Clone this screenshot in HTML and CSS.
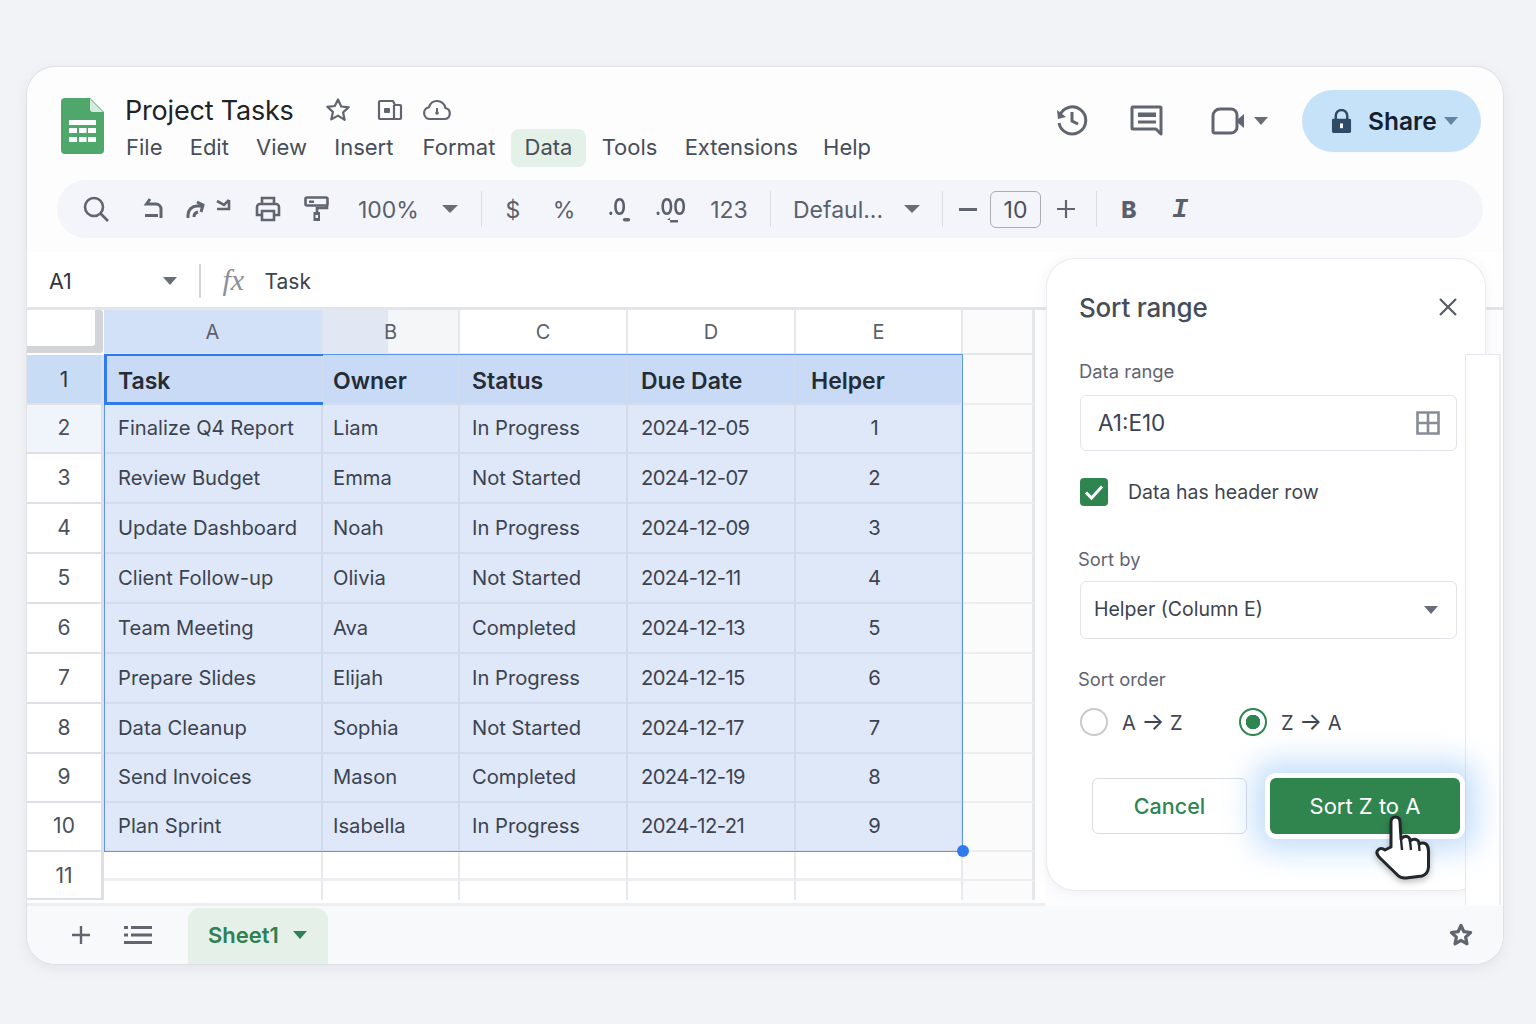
FILE: index.html
```html
<!DOCTYPE html>
<html lang="en">
<head>
<meta charset="utf-8">
<title>Project Tasks</title>
<link rel="stylesheet" href="styles.css">
</head>
<body>
<div class="window">
  <header class="header">
    <svg class="logo" viewBox="0 0 43 56"><path d="M4 0H29L43 14V52a4 4 0 0 1-4 4H4a4 4 0 0 1-4-4V4a4 4 0 0 1 4-4Z" fill="#4fa76c"/><path d="M29 1L42 14H32a3 3 0 0 1-3-3Z" fill="#d5ecdc"/><g fill="#fff"><rect x="8" y="22" width="27" height="5"/><rect x="8" y="30" width="8" height="5"/><rect x="18" y="30" width="7.500" height="5"/><rect x="27" y="30" width="8" height="5"/><rect x="8" y="39" width="8" height="5"/><rect x="18" y="39" width="7.500" height="5"/><rect x="27" y="39" width="8" height="5"/></g></svg>
    <div class="titles">
      <div class="title-row">
        <span class="doc-title">Project Tasks</span>
        <svg class="ico-star" viewBox="0 0 26 26"><path d="M13 2.500l3.200 7 7.500.8-5.600 5.100 1.600 7.500L13 18.600l-6.700 3.800 1.600-7.500-5.600-5.100 7.500-.8Z" fill="none" stroke="#60656f" stroke-width="2.200" stroke-linejoin="round"/></svg>
        <svg class="ico-move" viewBox="0 0 26 24"><path d="M3 3h13l2 4h5a1 1 0 0 1 1 1v12a1 1 0 0 1-1 1H3a1 1 0 0 1-1-1V4a1 1 0 0 1 1-1Z" fill="none" stroke="#60656f" stroke-width="2.200" stroke-linejoin="round"/><path d="M17 7v14" stroke="#60656f" stroke-width="2.200"/><rect x="7" y="10" width="6" height="5" rx="1" fill="#60656f"/></svg>
        <svg class="ico-cloud" viewBox="0 0 30 22"><path d="M8 20a6 6 0 0 1-1-11.900C8.200 4.300 11.300 2 15 2c4.300 0 7.800 3 8.400 7A5.600 5.600 0 0 1 23 20Z" fill="none" stroke="#60656f" stroke-width="2.200" stroke-linejoin="round"/><circle cx="15" cy="14" r="1.800" fill="#60656f"/><path d="M15 9v4" stroke="#60656f" stroke-width="2"/></svg>
      </div>
      <nav class="menu">
        <span class="menu-item">File</span>
        <span class="menu-item">Edit</span>
        <span class="menu-item">View</span>
        <span class="menu-item">Insert</span>
        <span class="menu-item menu-format">Format</span>
        <span class="menu-item menu-active">Data</span>
        <span class="menu-item menu-tools">Tools</span>
        <span class="menu-item">Extensions</span>
        <span class="menu-item menu-help">Help</span>
      </nav>
    </div>
    <div class="head-actions">
      <svg class="ico-history" viewBox="0 0 34 34"><path d="M5.500 13A13.500 13.500 0 1 1 5 20" fill="none" stroke="#60656f" stroke-width="3"/><path d="M3 7l1 9 8-2Z" fill="#60656f"/><path d="M18 9v9l6 3" fill="none" stroke="#60656f" stroke-width="3"/></svg>
      <svg class="ico-comment" viewBox="0 0 34 34"><path d="M3 3h27a1 1 0 0 1 1 1v26l-5-5H3a1 1 0 0 1-1-1V4a1 1 0 0 1 1-1Z" fill="none" stroke="#60656f" stroke-width="3" stroke-linejoin="round"/><path d="M8 8.500H26V13H8Z" fill="#60656f"/><path d="M8 18H26" stroke="#60656f" stroke-width="3"/></svg>
      <svg class="ico-video" viewBox="0 0 34 28"><path d="M9 2H20a6 6 0 0 1 6 6V20a6 6 0 0 1-6 6H4a2 2 0 0 1-2-2V9a7 7 0 0 1 7-7Z" fill="none" stroke="#60656f" stroke-width="3"/><path d="M26 13l7-6V21l-7-6Z" fill="#60656f"/></svg>
      <span class="caret caret-video"></span>
      <button class="share">
        <svg class="ico-lock" viewBox="0 0 22 26"><path d="M5 11V7a6 6 0 0 1 12 0v4" fill="none" stroke="#2f4a66" stroke-width="2.600"/><rect x="1" y="10" width="20" height="15" rx="1.500" fill="#2f4a66"/><rect x="9.500" y="15" width="3" height="5" fill="#fff"/></svg>
        <span>Share</span>
        <span class="caret caret-share"></span>
      </button>
    </div>
  </header>

  <div class="toolbar">
    <svg class="t-search" viewBox="0 0 28 28"><circle cx="12" cy="12" r="9" fill="none" stroke="#60656f" stroke-width="2.600"/><path d="M18.500 18.500L26 26" stroke="#60656f" stroke-width="2.600"/></svg>
    <svg class="t-undo" viewBox="0 0 24 24"><path d="M9 2L5.500 7H15a5 5 0 0 1 5 5v9M4 18.500H17" fill="none" stroke="#60656f" stroke-width="3"/></svg>
    <svg class="t-redo" viewBox="0 0 24 24"><path d="M4 21v-3a9 9 0 0 1 9-9h5M13 5l6 3-2 7M10 20a5 5 0 0 1 4-5" fill="none" stroke="#60656f" stroke-width="3"/></svg>
    <svg class="t-redo2" viewBox="0 0 16 16"><path d="M1 3l7 4 5-5M13 2v9H1" fill="none" stroke="#60656f" stroke-width="2.600"/></svg>
    <svg class="t-print" viewBox="0 0 26 26"><path d="M7 8V2h12v6M7 19H2V11a3 3 0 0 1 3-3h16a3 3 0 0 1 3 3v8h-5" fill="none" stroke="#60656f" stroke-width="2.600"/><path d="M7 15h12v9H7Z" fill="none" stroke="#60656f" stroke-width="2.600"/></svg>
    <svg class="t-paint" viewBox="0 0 26 26"><rect x="1.500" y="1.500" width="22" height="8" rx="1.500" fill="none" stroke="#60656f" stroke-width="2.600"/><path d="M5 4.500H10V7H5Z" fill="#60656f"/><path d="M23 9v3H13v4" fill="none" stroke="#60656f" stroke-width="2.600"/><rect x="9.500" y="16" width="6.500" height="9" fill="#60656f"/><rect x="11.500" y="19" width="2.500" height="3" fill="#f3f5fa"/></svg>
    <span class="t-text t-zoom">100%</span>
    <span class="caret t-caret-1"></span>
    <span class="sep sep-1"></span>
    <span class="t-text t-dollar">$</span>
    <span class="t-text t-percent">%</span>
    <span class="t-dec t-dec-less"><span class="t-text">.0</span><svg viewBox="0 0 12 6"><rect x="2" y="1" width="8" height="4" rx="2" fill="#60656f"/></svg></span>
    <span class="t-dec t-dec-more"><span class="t-text">.00</span><svg viewBox="0 0 14 6"><path d="M2 3L5 0.500V5.500H13V3H5Z" fill="#60656f"/></svg></span>
    <span class="t-text t-num">123</span>
    <span class="sep sep-2"></span>
    <span class="t-text t-font">Defaul...</span>
    <span class="caret t-caret-2"></span>
    <span class="sep sep-3"></span>
    <span class="t-minus"></span>
    <span class="t-size">10</span>
    <svg class="t-plus" viewBox="0 0 20 20"><path d="M10 1V19M1 10H19" stroke="#60656f" stroke-width="2.200"/></svg>
    <span class="sep sep-4"></span>
    <span class="t-text t-bold">B</span>
    <span class="t-text t-italic">I</span>
  </div>

  <div class="formula">
    <span class="cell-name">A1</span>
    <span class="caret f-caret"></span>
    <span class="f-sep"></span>
    <span class="fx">fx</span>
    <span class="f-value">Task</span>
  </div>

  <div class="sheet">
    <div class="grid">
      <div class="corner"></div>
      <div class="ch ch-sel">A</div>
      <div class="ch ch-b">B</div>
      <div class="ch">C</div>
      <div class="ch">D</div>
      <div class="ch">E</div>
      <div class="ch ch-f"></div>

      <div class="rh rh-active">1</div>
      <div class="c hd a">Task</div><div class="c hd b">Owner</div><div class="c hd d">Status</div><div class="c hd e">Due Date</div><div class="c hd f">Helper</div><div class="x"></div>

      <div class="rh rh-second">2</div>
      <div class="c a">Finalize Q4 Report</div><div class="c b">Liam</div><div class="c d">In Progress</div><div class="c e date">2024-12-05</div><div class="c n">1</div><div class="x"></div>

      <div class="rh">3</div>
      <div class="c a">Review Budget</div><div class="c b">Emma</div><div class="c d">Not Started</div><div class="c e date">2024-12-07</div><div class="c n">2</div><div class="x"></div>

      <div class="rh">4</div>
      <div class="c a">Update Dashboard</div><div class="c b">Noah</div><div class="c d">In Progress</div><div class="c e date">2024-12-09</div><div class="c n">3</div><div class="x"></div>

      <div class="rh">5</div>
      <div class="c a">Client Follow-up</div><div class="c b">Olivia</div><div class="c d">Not Started</div><div class="c e date">2024-12-11</div><div class="c n">4</div><div class="x"></div>

      <div class="rh">6</div>
      <div class="c a">Team Meeting</div><div class="c b">Ava</div><div class="c d">Completed</div><div class="c e date">2024-12-13</div><div class="c n">5</div><div class="x"></div>

      <div class="rh">7</div>
      <div class="c a">Prepare Slides</div><div class="c b">Elijah</div><div class="c d">In Progress</div><div class="c e date">2024-12-15</div><div class="c n">6</div><div class="x"></div>

      <div class="rh">8</div>
      <div class="c a">Data Cleanup</div><div class="c b">Sophia</div><div class="c d">Not Started</div><div class="c e date">2024-12-17</div><div class="c n">7</div><div class="x"></div>

      <div class="rh">9</div>
      <div class="c a">Send Invoices</div><div class="c b">Mason</div><div class="c d">Completed</div><div class="c e date">2024-12-19</div><div class="c n">8</div><div class="x"></div>

      <div class="rh">10</div>
      <div class="c a">Plan Sprint</div><div class="c b">Isabella</div><div class="c d">In Progress</div><div class="c e date">2024-12-21</div><div class="c n">9</div><div class="x"></div>

      <div class="rh rh-last">11</div>
      <div class="e0"></div><div class="e0"></div><div class="e0"></div><div class="e0"></div><div class="e0"></div><div class="x"></div>
      <div class="e1"></div><div class="e1"></div><div class="e1"></div><div class="e1"></div><div class="e1"></div><div class="x x-end"></div>

      <div class="selection"><span class="handle"></span></div>
      <div class="active-cell"></div>
    </div>
  </div>

  <footer class="footer">
    <svg class="ft-plus" viewBox="0 0 20 20"><path d="M10 1V19M1 10H19" stroke="#60656f" stroke-width="2.400"/></svg>
    <svg class="ft-list" viewBox="0 0 28 20"><path d="M0 2.500H4M7 2.500H28M0 10H4M7 10H28M0 17.500H28" stroke="#60656f" stroke-width="2.800"/></svg>
    <div class="tab"><span>Sheet1</span><span class="caret caret-tab"></span></div>
    <svg class="ft-star" viewBox="0 0 24 24"><path d="M12 2.500l2.900 6.200 6.700.8-5 4.600 1.400 6.700L12 17.400l-6 3.400 1.400-6.700-5-4.600 6.700-.8Z" fill="#fff" stroke="#60656f" stroke-width="3.200" stroke-linejoin="round"/></svg>
  </footer>

  <aside class="panel">
    <div class="panel-strip"></div>
    <div class="panel-head">
      <h2 class="panel-title">Sort range</h2>
      <svg class="panel-close" viewBox="0 0 20 20"><path d="M2 2L18 18M18 2L2 18" stroke="#555a64" stroke-width="2.200"/></svg>
    </div>
    <label class="label label-range">Data range</label>
    <div class="field field-range">
      <span>A1:E10</span>
      <svg class="ico-grid" viewBox="0 0 24 24"><path d="M1.500 1.500H22.500V22.500H1.500ZM12 1.500V22.500M1.500 12H22.500" fill="none" stroke="#888c94" stroke-width="2.600"/></svg>
    </div>
    <div class="check-row">
      <span class="check"><svg viewBox="0 0 28 28"><path d="M6 14.500L11.500 20L22 8.500" fill="none" stroke="#fff" stroke-width="3"/></svg></span>
      <span>Data has header row</span>
    </div>
    <label class="label label-by">Sort by</label>
    <div class="field field-by">
      <span class="field-text">Helper (Column E)</span>
      <span class="caret caret-by"></span>
    </div>
    <label class="label label-order">Sort order</label>
    <div class="radios">
      <span class="radio"></span><span class="radio-text">A <span class="arrow">→</span> Z</span>
      <span class="radio radio-on"></span><span class="radio-text">Z <span class="arrow">→</span> A</span>
    </div>
    <div class="buttons">
      <button class="btn-cancel">Cancel</button>
      <button class="btn-sort">Sort Z to A</button>
    </div>
    <svg class="hand" viewBox="0 0 65 75"><path d="M21 38V13Q21 8 25.500 8Q30 8 30 13L31 30Q35 26 38 28Q40 29 40 32Q44 29 47 31Q49 32 49 35Q53 33 56 35Q58.500 37 58.500 42V58Q58 65 52 67L36 69Q31 69.500 28 66.500L10 49Q5 44 8 41Q11 38 15 41Z" fill="#fff" stroke="#23262b" stroke-width="3" stroke-linejoin="round"/><path d="M31 30L32 41M40 32L41 41M49 35L49.500 42" fill="none" stroke="#23262b" stroke-width="2.400"/></svg>
  </aside>
</div>
</body>
</html>
```
FILE: styles.css
```css
* { box-sizing: border-box; }
html, body { margin: 0; height: 100%; }
body {
  background: #f2f3f6;
  padding: 67px 33px 60px 27px;
  font-family: "Inter", "Liberation Sans", sans-serif;
  color: #3c4350;
  overflow: hidden;
}
svg { display: block; flex: none; }
button { font-family: inherit; border: 0; padding: 0; }

.window {
  position: relative;
  width: 1476px;
  height: 897px;
  background: #fdfdfe;
  border-radius: 28px;
  box-shadow: 0 0 0 1px #dfe1e7, 0 4px 14px rgba(90, 100, 130, .10);
  overflow: hidden;
  display: flex;
  flex-direction: column;
}

.caret {
  display: block;
  flex: none;
  width: 0;
  height: 0;
  border-left: 8px solid transparent;
  border-right: 8px solid transparent;
  border-top: 8px solid #686d77;
}

/* header */
.header { height: 108px; display: flex; flex: none; padding: 31px 22px 0 34px; }
.logo { width: 43px; height: 56px; }
.titles { margin-left: 21px; margin-top: -6px; }
.title-row { display: flex; align-items: center; height: 36px; }
.doc-title { font-size: 27px; color: #202227; letter-spacing: -.2px; }
.ico-star { width: 26px; height: 26px; margin-left: 31px; }
.ico-move { width: 26px; height: 24px; margin-left: 26px; }
.ico-cloud { width: 30px; height: 22px; margin-left: 19px; }
.menu { display: flex; margin-left: -12.600px; margin-top: 1px; }
.menu-item { font-size: 22px; padding: 0 13.600px; height: 38px; line-height: 37px; color: #474e5a; border-radius: 8px; }
.menu-format { margin-left: 2px; }
.menu-active { background: #e3f1e8; margin-left: 2px; }
.menu-tools { margin-left: 2px; }
.menu-help { margin-left: -2px; }
.head-actions { margin-left: auto; display: flex; align-items: center; height: 62px; margin-top: -8px; }
.ico-history { width: 34px; height: 34px; margin-top: -2px; margin-right: 2px; position: relative; left: -1px; }
.ico-comment { width: 34px; height: 34px; margin-left: 39px; }
.ico-video { width: 34px; height: 28px; margin-left: 47px; }
.caret-video { margin-left: 9px; border-left-width: 7px; border-right-width: 7px; }
.share {
  margin-left: 34px;
  width: 179px;
  height: 62px;
  border-radius: 31px;
  background: #c5e2f8;
  display: flex;
  align-items: center;
  padding-left: 29px;
  font-size: 24.500px;
  font-weight: 600;
  color: #15202e;
}
.ico-lock { width: 21px; height: 25px; margin-right: 16px; }
.caret-share { margin-left: 7px; border-left-width: 7px; border-right-width: 7px; border-top-color: #5f86a6; }

/* toolbar */
.toolbar {
  flex: none;
  margin: 5px 20px 0 30px;
  height: 58px;
  border-radius: 29px;
  background: #f3f5fa;
  display: flex;
  align-items: center;
  padding-left: 25px;
}
.t-text { font-size: 23px; color: #5a606b; line-height: 1; padding-top: 2px; }
.sep { display: block; flex: none; width: 1px; height: 36px; background: #d9dce3; }
.t-search { width: 28px; height: 28px; }
.t-undo { width: 24px; height: 24px; margin-left: 31px; }
.t-redo { width: 24px; height: 24px; margin-left: 19px; }
.t-redo2 { width: 16px; height: 16px; margin-left: 8px; margin-top: -6px; }
.t-print { width: 26px; height: 26px; margin-left: 23px; }
.t-paint { width: 26px; height: 26px; margin-left: 23px; }
.t-zoom { width: 60px; margin-left: 28px; }
.t-caret-1 { margin-left: 24px; }
.sep-1 { margin-left: 23px; }
.t-dollar { width: 20px; margin-left: 21px; text-align: center; }
.t-percent { width: 24px; margin-left: 29px; text-align: center; }
.t-dec { position: relative; display: block; flex: none; text-align: center; }
.t-dec-less { width: 32px; margin-left: 25px; }
.t-dec-more { width: 40px; margin-left: 18px; }
.t-dec .t-text { display: inline-block; position: relative; top: -3px; font-weight: 600; transform: scaleX(.84); }
.t-dec svg { position: absolute; bottom: -1px; right: 1px; width: 11px; height: 5.500px; }
.t-dec-more svg { width: 14px; height: 6px; right: 12px; }
.t-num { width: 40px; margin-left: 18px; text-align: center; }
.sep-2 { margin-left: 21px; }
.t-font { width: 88px; margin-left: 22px; white-space: nowrap; }
.t-caret-2 { margin-left: 23px; }
.sep-3 { margin-left: 22px; }
.t-minus { display: block; flex: none; width: 18px; height: 3px; margin-left: 16px; background: #60656f; }
.t-size {
  width: 51px;
  height: 37px;
  margin-left: 13px;
  border: 1.500px solid #a9adb5;
  border-radius: 6px;
  text-align: center;
  line-height: 36px;
  font-size: 23px;
  color: #4a505b;
}
.t-plus { width: 20px; height: 20px; margin-left: 15px; }
.sep-4 { margin-left: 20px; }
.t-bold { width: 20px; margin-left: 22px; text-align: center; font-weight: 800; }
.t-italic { width: 20px; margin-left: 31px; text-align: center; font-family: "Liberation Mono", monospace; font-weight: 700; font-style: italic; font-size: 27px; }

/* formula bar */
.formula {
  flex: none;
  margin-top: 14px;
  height: 58px;
  border-bottom: 3px solid #e4e5ea;
  background: #fff;
  display: flex;
  align-items: center;
  padding: 3px 0 0 22px;
  font-size: 21px;
  color: #30353f;
}
.cell-name { width: 114px; font-size: 21.500px; }
.f-caret { border-left-width: 7.500px; border-right-width: 7.500px; }
.f-sep { width: 1.500px; height: 34px; margin-left: 22px; background: #d3d5da; }
.fx { margin-left: 22px; width: 42px; font-family: "Liberation Serif", serif; font-style: italic; font-size: 30px; color: #8b8f97; margin-top: -3px; }
.f-value { color: #3c4350; }

/* sheet */
.sheet { flex: none; height: 596px; border-bottom: 3px solid #eceef1; width: 1018px; background: #fff; }
.grid {
  position: relative;
  display: grid;
  width: 1010px;
  grid-template-columns: 77px 219px 137px 168px 168px 167px 72px;
  grid-template-rows: 45px 50px 49px 50px 50px 50px 50px 50px 50px 49px 49px 29px 19px;
  font-size: 20.200px;
  color: #3c4350;
}
.corner {
  background: #fff;
  box-shadow: inset -8px -7px 0 #d3d4d8;
  border-radius: 0 3px 3px 0;
  background-clip: padding-box;
  margin: 0 1px 2px 0;
}
.ch {
  display: flex;
  align-items: center;
  justify-content: center;
  font-size: 20px;
  color: #5b616c;
  background: #fff;
  border-right: 2px solid #e6e7eb;
  border-bottom: 2px solid #e6e7eb;
}
.ch-sel { background: #d3e1f8; border-right-color: #dde3ee; }
.ch-b { background: linear-gradient(90deg, #e2e8f3 0 48%, #f5f6f8 48% 100%); }
.ch-f { background: #fbfbfb; border-right: 3px solid #e6e7eb; }
.rh {
  display: flex;
  align-items: center;
  justify-content: center;
  background: #fff;
  border-right: 3px solid #dfe0e5;
  border-bottom: 2px solid #dfe0e5;
  font-size: 21px;
  color: #4b515c;
  padding-bottom: 2px;
}
.rh-active { background: #c9dcf6; color: #2a3340; padding-bottom: 0; }
.rh-second { background: #f0f4fb; }
.rh-last { grid-row: span 2; padding-bottom: 0; }
.c {
  display: flex;
  align-items: center;
  background: #dfe8f9;
  border-right: 2px solid #d2dbeb;
  border-bottom: 2px solid #d3dcec;
  white-space: nowrap;
  padding-bottom: 2px;
}
.hd { background: #c8daf5; font-size: 23px; font-weight: 600; color: #262c35; padding: 3px 0 0; }
.a.c { padding-left: 14px; }
.b.c { padding-left: 10px; }
.d.c { padding-left: 12px; }
.e.c { padding-left: 13px; }
.f.c { padding-left: 15px; }
.date { letter-spacing: -.6px; }
.n { justify-content: center; padding-right: 8px; }
.x { background: #fbfbfb; border-right: 3px solid #e6e7eb; border-bottom: 2px solid #eceef1; }
.x-end { border-bottom: 0; }
.e0 { background: #fff; border-right: 2px solid #e8e9ee; border-bottom: 3px solid #eceef1; }
.e1 { background: #fff; border-right: 2px solid #e8e9ee; }
.selection {
  grid-column: 2 / 7;
  grid-row: 2 / 12;
  position: absolute;
  inset: -1px 0 0;
  border: 1.500px solid #5b96ea;
  pointer-events: none;
}
.handle {
  position: absolute;
  right: -7px;
  bottom: -6px;
  width: 12px;
  height: 12px;
  border-radius: 50%;
  background: #2f7bec;
}
.active-cell {
  grid-column: 2 / 3;
  grid-row: 2 / 3;
  position: absolute;
  inset: -1px 0 0;
  border: 3px solid #2f7bec;
  border-top-width: 2px;
  border-right: 0;
}

/* footer */
.footer {
  flex: 1;
  background: #f8f9fb;
  display: flex;
  padding-left: 44px;
  align-items: center;
}
.ft-plus { width: 20px; height: 20px; }
.ft-list { width: 28px; height: 20px; margin-left: 33px; }
.tab {
  margin-left: 36px;
  align-self: flex-end;
  width: 140px;
  height: 56px;
  background: #e5f0e8;
  border-radius: 12px 12px 0 0;
  display: flex;
  align-items: center;
  padding: 0 0 2px 20px;
  font-size: 22px;
  font-weight: 600;
  color: #2f8153;
}
.caret-tab { margin-left: 14px; border-left-width: 7px; border-right-width: 7px; border-top-color: #2f8153; }
.ft-star { width: 24px; height: 24px; margin-left: auto; margin-right: 30px; }

/* panel */
.panel {
  position: absolute;
  left: 1020px;
  top: 192px;
  width: 438px;
  height: 631px;
  background: #fff;
  border-radius: 28px;
  box-shadow: 0 0 0 1px #eaebf0, 0 2px 14px rgba(90, 100, 130, .10);
  padding: 0 0 0 32px;
}
.panel-strip {
  position: absolute;
  left: 418px;
  top: 95px;
  width: 36px;
  height: 551px;
  background: #fff;
  border-left: 1px solid #e6e7ec;
  border-top: 1px solid #e6e7ec;
  border-right: 2px solid #eceef1;
}
.panel > * { position: relative; }
.panel > .panel-strip { position: absolute; }
.panel-head { display: flex; align-items: center; height: 36px; margin-top: 30px; width: 379px; justify-content: space-between; }
.panel-title { margin: 0; font-size: 26px; font-weight: 500; color: #474d58; letter-spacing: -.2px; }
.panel-close { width: 20px; height: 20px; margin-right: 0; }
.label { display: block; font-size: 18.400px; color: #5f6570; line-height: 24px; }
.label-range { margin-top: 34px; }
.field {
  width: 377px;
  margin-left: 1px;
  background: #fff;
  border: 1.500px solid #e2e4ea;
  border-radius: 6px;
  display: flex;
  align-items: center;
  justify-content: space-between;
  font-size: 22.500px;
  color: #3c4350;
}
.field-range { height: 56px; margin-top: 12px; padding: 0 16px 2px 17px; }
.ico-grid { width: 24px; height: 24px; margin-top: 2px; }
.check-row { display: flex; align-items: center; margin: 27px 0 0 1px; font-size: 19.500px; color: #3f4550; }
.check { width: 28px; height: 28px; border-radius: 4px; background: #2f8550; margin-right: 20px; }
.label-by { margin-top: 41px; margin-left: -1px; }
.field-by { height: 58px; margin-top: 10px; padding: 0 18px 0 13px; font-size: 19.500px; }
.field-text { margin-top: -3px; }
.caret-by { border-left-width: 7px; border-right-width: 7px; }
.label-order { margin-top: 28px; margin-left: -1px; }
.radios { display: flex; align-items: center; margin-top: 17px; font-size: 20px; color: #3f4550; }
.radio { width: 28px; height: 28px; border-radius: 50%; border: 2.500px solid #c8cace; background: #fff; flex: none; margin-left: 1px; }
.radio-on { border-color: #2f8550; background: radial-gradient(circle, #2f8550 0 7px, #fff 7.500px); margin-left: 1px; }
.radio-text { margin-left: 14px; width: 116px; }
.arrow { font-size: 24px; line-height: 1; }
.buttons { display: flex; margin-top: 42px; margin-left: 13px; align-items: flex-start; }
.btn-cancel {
  width: 155px;
  height: 56px;
  background: #fff;
  border: 1.500px solid #d9dce3;
  border-radius: 6px;
  color: #2f8553;
  font-size: 21.500px;
  font-weight: 500;
}
.btn-sort {
  margin-left: 23px;
  width: 190px;
  height: 56px;
  background: #30854f;
  border-radius: 6px;
  color: #fff;
  font-size: 22px;
  box-shadow: 0 0 0 5px #fff, 0 0 30px 16px rgba(120, 180, 245, .45);
}
.panel > .hand { position: absolute; left: 323px; top: 550px; width: 65px; height: 75px; filter: drop-shadow(0 3px 3px rgba(0,0,0,.25)); }
```
